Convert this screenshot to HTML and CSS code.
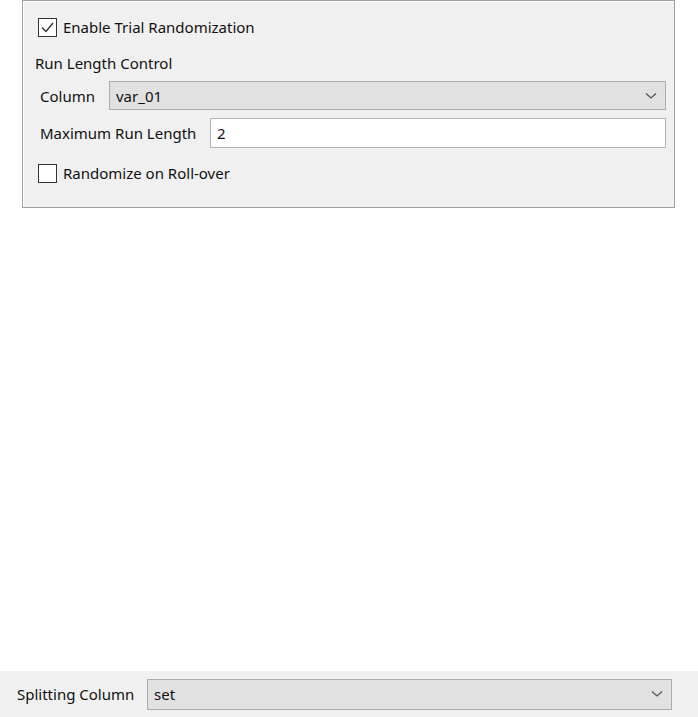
FILE: index.html
```html
<!DOCTYPE html>
<html>
<head>
<meta charset="utf-8">
<link rel="stylesheet" href="styles.css">
</head>
<body>
<div class="page">
  <div class="panel">
    <div class="check-row first">
      <span class="box">
        <svg width="17" height="17" viewBox="0 0 17 17"><path d="M3 8.5 L7 12.5 L14 4" fill="none" stroke="#333" stroke-width="1.4"/></svg>
      </span>
      <span class="text">Enable Trial Randomization</span>
    </div>
    <div class="section">Run Length Control</div>
    <div class="field-row combo-row">
      <span class="label col-label">Column</span>
      <div class="combo">
        <span class="value">var_01</span>
        <svg class="chev" width="12" height="8" viewBox="0 0 12 8"><path d="M1 1.5 L6 6 L11 1.5" fill="none" stroke="#555" stroke-width="1.3"/></svg>
      </div>
    </div>
    <div class="field-row input-row">
      <span class="label max-label">Maximum Run Length</span>
      <div class="input"><span class="value">2</span></div>
    </div>
    <div class="check-row second">
      <span class="box"></span>
      <span class="text">Randomize on Roll-over</span>
    </div>
  </div>
  <div class="spacer"></div>
  <div class="bottom-bar">
    <span class="label split-label">Splitting Column</span>
    <div class="combo bottom-combo">
      <span class="value">set</span>
      <svg class="chev" width="12" height="8" viewBox="0 0 12 8"><path d="M1 1.5 L6 6 L11 1.5" fill="none" stroke="#555" stroke-width="1.3"/></svg>
    </div>
  </div>
</div>
</body>
</html>
```

FILE: styles.css
```css
* { box-sizing: border-box; }
html, body {
  margin: 0;
  padding: 0;
  background: #ffffff;
}
body {
  font-family: "Noto Sans", "Open Sans", sans-serif;
  font-size: 15px;
  color: #111;
}
.page {
  width: 698px;
  height: 717px;
  display: flex;
  flex-direction: column;
}
.panel {
  margin-left: 22px;
  width: 653px;
  height: 208px;
  background: #f0f0f0;
  border: 1px solid #a0a0a0;
  box-shadow: inset 1px 1px 0 #ffffff;
  padding: 17px 0 0 0;
  display: flex;
  flex-direction: column;
}
.check-row {
  display: flex;
  align-items: center;
  height: 19px;
  padding-left: 15px;
}
.check-row.second { margin-top: 16px; }
.box {
  width: 19px;
  height: 19px;
  border: 1px solid #333;
  background: #fff;
  display: flex;
  align-items: center;
  justify-content: center;
  flex-shrink: 0;
}
.check-row .text {
  margin-left: 6px;
  line-height: 19px;
}
.section {
  margin-top: 16px;
  padding-left: 12px;
  line-height: 20px;
  height: 20px;
}
.field-row {
  display: flex;
  align-items: center;
}
.combo-row {
  margin-top: 8px;
  padding-left: 17px;
  padding-right: 8px;
}
.col-label { width: 69px; }
.combo {
  flex: 1;
  height: 29px;
  background: #e1e1e1;
  border: 1px solid #adadad;
  display: flex;
  align-items: center;
  justify-content: space-between;
  padding: 0 8px 0 6px;
}
.input-row {
  margin-top: 8px;
  padding-left: 17px;
  padding-right: 8px;
}
.max-label { width: 170px; }
.input {
  flex: 1;
  height: 30px;
  background: #fff;
  border: 1px solid #b4b4b4;
  display: flex;
  align-items: center;
  padding-left: 6px;
}
.spacer { flex: 1; }
.bottom-bar {
  height: 46px;
  background: #f0f0f0;
  display: flex;
  align-items: center;
  padding-left: 17px;
  padding-right: 26px;
}
.split-label { width: 130px; }
.bottom-combo {
  height: 31px;
}
.chev { flex-shrink: 0; }
```
